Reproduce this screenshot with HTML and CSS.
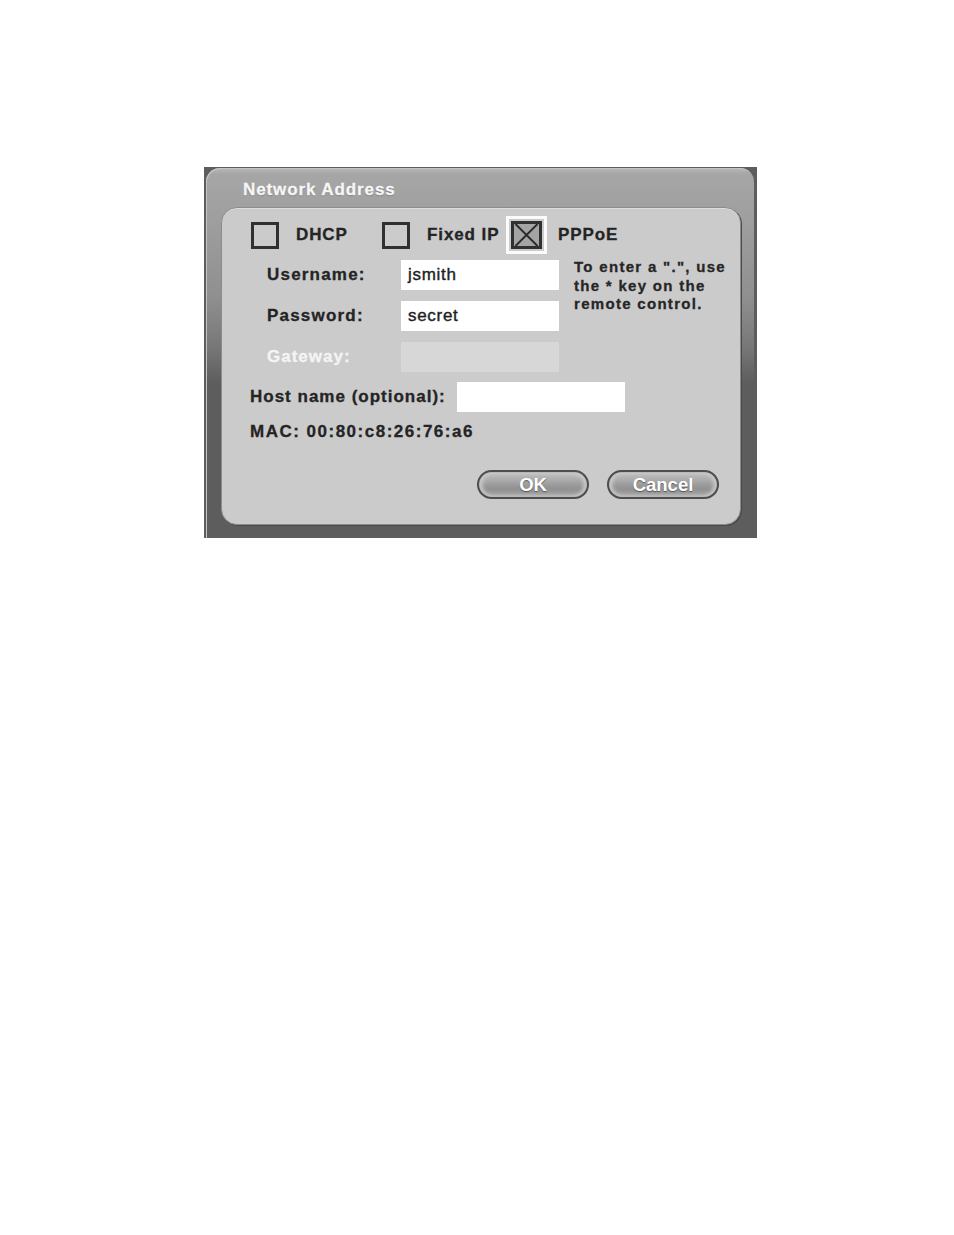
FILE: index.html
```html
<!DOCTYPE html>
<html lang="en">
<head>
<meta charset="utf-8">
<title>Network Address</title>
<link rel="stylesheet" href="styles.css">
</head>
<body>
<div class="page">
  <div class="dialog">
    <div class="frame">
      <div class="title">Network Address</div>
      <div class="panel">
        <div class="options">
          <div class="option">
            <span class="check"><span class="box"></span></span>
            <span class="opt-label">DHCP</span>
          </div>
          <div class="option">
            <span class="check"><span class="box"></span></span>
            <span class="opt-label">Fixed IP</span>
          </div>
          <div class="option">
            <span class="check is-focused"><span class="box is-checked"><svg class="x-mark" viewBox="0 0 22 22" width="22" height="22"><path d="M0 0 L22 22 M22 0 L0 22" stroke="#2b2b2b" stroke-width="2" fill="none"/></svg></span></span>
            <span class="opt-label">PPPoE</span>
          </div>
        </div>
        <div class="fields">
          <div class="field-label">Username:</div>
          <div class="input">jsmith</div>
          <div class="hint">To enter a ".", use<br>the * key on the<br>remote control.</div>
          <div class="field-label">Password:</div>
          <div class="input">secret</div>
          <div class="field-label is-disabled">Gateway:</div>
          <div class="input is-disabled"></div>
        </div>
        <div class="host-row">
          <div class="field-label host-label">Host name (optional):</div>
          <div class="input"></div>
        </div>
        <div class="mac">MAC: 00:80:c8:26:76:a6</div>
        <div class="actions">
          <div class="btn">OK</div>
          <div class="btn">Cancel</div>
        </div>
      </div>
    </div>
  </div>
</div>
</body>
</html>
```

FILE: styles.css
```css
html, body {
  margin: 0;
  padding: 0;
  background: #ffffff;
}

body {
  font-family: "Liberation Sans", Arial, sans-serif;
  color: #222222;
}

.page {
  padding: 167px 0 0 204px;
  height: 1235px;
  box-sizing: border-box;
}

.dialog {
  width: 553px;
  height: 371px;
  background: #5d5d5d;
  padding: 1px 3px 0 2px;
  box-sizing: border-box;
}

.frame {
  height: 100%;
  border-radius: 14px 14px 0 0;
  background: linear-gradient(to bottom, #b9b9b9 0, #a6a6a6 6px, #9d9d9d 60px, #8f8f8f 130px, #777777 180px, #5d5d5d 215px);
  padding-left: 15px;
  box-sizing: border-box;
  box-shadow: inset 1px 1px 0 #c4c4c4;
}

.title {
  height: 39px;
  box-sizing: border-box;
  padding: 4px 0 0 22px;
  line-height: 35px;
  font-size: 17px;
  font-weight: bold;
  letter-spacing: 0.9px;
  color: #f6f6f6;
  -webkit-text-stroke: 0.3px #f6f6f6;
  text-shadow: 0 1px 1px #7a7a7a;
}

.panel {
  width: 520px;
  height: 318px;
  box-sizing: border-box;
  background: #cbcbcb;
  border: 1px solid #8c8c8c;
  border-radius: 16px;
  box-shadow: inset 0 1px 0 #dedede, 1px 1px 0 #4a4a4a;
}

.options {
  display: flex;
  align-items: center;
  margin-top: 8px;
  padding-left: 22px;
  height: 38px;
}

.option {
  display: flex;
  align-items: center;
  width: 131px;
}

.option:last-child {
  width: auto;
}

.check {
  width: 41px;
  height: 38px;
  box-sizing: border-box;
  border: 3px solid transparent;
  display: flex;
  align-items: center;
  justify-content: center;
}

.check.is-focused {
  border-color: #fbfbfb;
}

.box {
  width: 28px;
  height: 27px;
  box-sizing: border-box;
  border: 3px solid #303030;
  display: flex;
  align-items: center;
  justify-content: center;
}

.box.is-checked {
  width: 31px;
  height: 28px;
  background: #a4a4a4;
}

.x-mark {
  width: 25px;
  height: 22px;
  display: block;
}

.opt-label {
  margin-left: 11px;
  font-size: 17px;
  font-weight: bold;
  letter-spacing: 0.9px;
  color: #242424;
  -webkit-text-stroke: 0.3px #242424;
}

.fields {
  display: grid;
  grid-template-columns: 134px 158px 1fr;
  grid-template-rows: 30px 30px 30px;
  row-gap: 11px;
  margin-top: 6px;
  padding-left: 45px;
  align-items: center;
}

.field-label {
  font-size: 17px;
  font-weight: bold;
  letter-spacing: 1.2px;
  color: #242424;
  -webkit-text-stroke: 0.3px #242424;
  white-space: nowrap;
}

.field-label.is-disabled {
  color: #f4f4f4;
  -webkit-text-stroke: 0.3px #f4f4f4;
  letter-spacing: 1px;
}

.input {
  height: 30px;
  box-sizing: border-box;
  background: #ffffff;
  padding-left: 7px;
  line-height: 29px;
  font-size: 17px;
  letter-spacing: 0.7px;
  color: #1e1e1e;
  -webkit-text-stroke: 0.4px #1e1e1e;
}

.input.is-disabled {
  background: #d7d7d7;
}

.hint {
  grid-column: 3;
  grid-row: 1 / span 3;
  align-self: start;
  margin-top: -2px;
  padding-left: 15px;
  font-size: 15px;
  font-weight: bold;
  letter-spacing: 1.3px;
  line-height: 18.5px;
  color: #262626;
  -webkit-text-stroke: 0.3px #262626;
  white-space: nowrap;
}

.host-row {
  display: grid;
  grid-template-columns: 207px 168px;
  align-items: center;
  margin-top: 10px;
  padding-left: 28px;
}

.host-label {
  letter-spacing: 1px;
}

.mac {
  margin-top: 10px;
  padding-left: 28px;
  line-height: 20px;
  font-size: 17px;
  font-weight: bold;
  letter-spacing: 1.5px;
  color: #242424;
  -webkit-text-stroke: 0.3px #242424;
}

.actions {
  display: flex;
  justify-content: flex-end;
  gap: 18px;
  margin-top: 28px;
  padding-right: 21px;
}

.btn {
  width: 112px;
  height: 29px;
  box-sizing: border-box;
  border: 2px solid #4e4e4e;
  border-radius: 15px;
  background: linear-gradient(to bottom, #c2c2c2 0, #adadad 30%, #989898 55%, #929292 70%, #a6a6a6 100%);
  box-shadow: inset 0 0 0 1px #b8b8b8, inset 3px 0 4px #cfcfcf, inset -3px 0 4px #cfcfcf;
  display: flex;
  align-items: center;
  justify-content: center;
  font-size: 18.5px;
  font-weight: bold;
  color: #ffffff;
  text-shadow: 0 1px 1px #555555;
}
```
